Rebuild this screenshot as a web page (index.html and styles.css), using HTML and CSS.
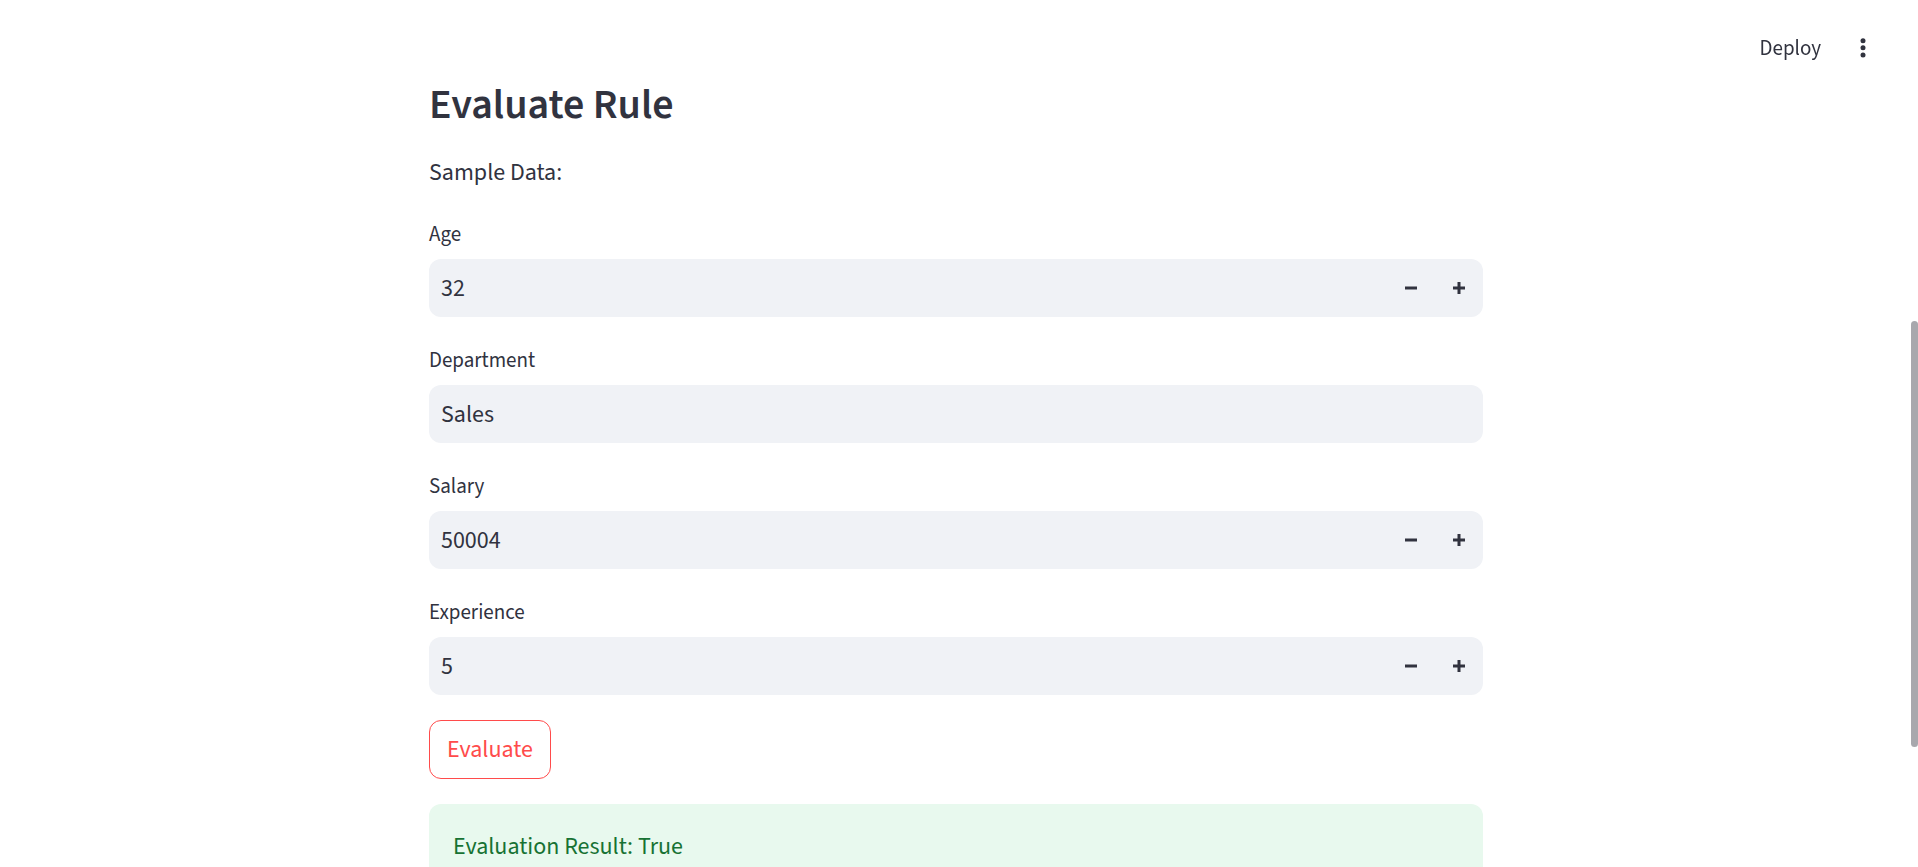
FILE: index.html
```html
<!DOCTYPE html>
<html>
<head>
<meta charset="utf-8">
<title>Evaluate Rule</title>
<link rel="stylesheet" href="styles.css">
</head>
<body>
<header class="topbar">
  <span class="deploy">Deploy</span>
  <svg class="menu" width="24" height="24" viewBox="0 0 24 24" aria-hidden="true">
    <circle cx="12" cy="4.7" r="2.5"/>
    <circle cx="12" cy="11.8" r="2.5"/>
    <circle cx="12" cy="19" r="2.5"/>
  </svg>
</header>
<main class="main">
  <h3 class="title">Evaluate Rule</h3>
  <p class="text">Sample Data:</p>

  <div class="field first">
    <label class="label">Age</label>
    <div class="input">
      <span class="value">32</span>
      <span class="step"><svg width="12" height="12" viewBox="0 0 12 12"><rect x="0" y="4.5" width="12" height="3"/></svg></span>
      <span class="step"><svg width="12" height="12" viewBox="0 0 12 12"><rect x="0" y="4.5" width="12" height="3"/><rect x="4.5" y="0" width="3" height="12"/></svg></span>
    </div>
  </div>

  <div class="field">
    <label class="label">Department</label>
    <div class="input">
      <span class="value">Sales</span>
    </div>
  </div>

  <div class="field">
    <label class="label">Salary</label>
    <div class="input">
      <span class="value">50004</span>
      <span class="step"><svg width="12" height="12" viewBox="0 0 12 12"><rect x="0" y="4.5" width="12" height="3"/></svg></span>
      <span class="step"><svg width="12" height="12" viewBox="0 0 12 12"><rect x="0" y="4.5" width="12" height="3"/><rect x="4.5" y="0" width="3" height="12"/></svg></span>
    </div>
  </div>

  <div class="field">
    <label class="label">Experience</label>
    <div class="input">
      <span class="value">5</span>
      <span class="step"><svg width="12" height="12" viewBox="0 0 12 12"><rect x="0" y="4.5" width="12" height="3"/></svg></span>
      <span class="step"><svg width="12" height="12" viewBox="0 0 12 12"><rect x="0" y="4.5" width="12" height="3"/><rect x="4.5" y="0" width="3" height="12"/></svg></span>
    </div>
  </div>

  <button class="btn">Evaluate</button>

  <div class="alert">Evaluation Result: True</div>
</main>
<div class="scrollbar"></div>
</body>
</html>
```

FILE: styles.css
```css
html, body {
  margin: 0;
  padding: 0;
  background: #ffffff;
  height: 100%;
  overflow: hidden;
}

body {
  font-family: "Source Sans Pro", "Source Sans 3", Lato, sans-serif;
  color: #31333F;
}

.topbar {
  position: fixed;
  top: 0;
  left: 0;
  right: 0;
  height: 96px;
  display: flex;
  align-items: center;
  justify-content: flex-end;
  padding-right: 43px;
  gap: 30px;
}

.deploy {
  font-size: 21px;
  line-height: 30px;
  color: #31333F;
}

.menu {
  display: block;
  fill: #31333F;
}

.main {
  width: 1054px;
  margin-left: 429px;
  padding-top: 80px;
  display: flex;
  flex-direction: column;
  align-items: flex-start;
}

.title {
  margin: 0;
  font-size: 42px;
  line-height: 50px;
  font-weight: 600;
  color: #31333F;
}

.text {
  margin: 24px 0 0;
  font-size: 24px;
  line-height: 38px;
}

.field {
  width: 100%;
  margin-top: 28px;
  display: flex;
  flex-direction: column;
}

.field.first {
  margin-top: 27px;
}

.label {
  font-size: 21px;
  line-height: 30px;
  margin-bottom: 10px;
}

.input {
  height: 58px;
  background: #f0f2f6;
  border-radius: 12px;
  display: flex;
  align-items: center;
  padding-left: 12px;
  font-size: 24px;
}

.value {
  flex: 1;
}

.step {
  width: 48px;
  height: 58px;
  display: flex;
  align-items: center;
  justify-content: center;
  fill: #31333F;
}

.step svg {
  display: block;
}

.btn {
  margin-top: 25px;
  width: 122px;
  height: 59px;
  padding: 0;
  border: 1.5px solid #ff4b4b;
  border-radius: 12px;
  background: #ffffff;
  color: #ff4b4b;
  font-family: inherit;
  font-size: 24px;
}

.alert {
  margin-top: 25px;
  width: 100%;
  box-sizing: border-box;
  padding: 24px 24px 40px;
  border-radius: 12px;
  background: #e8f9ee;
  color: #177233;
  font-size: 24px;
  line-height: 38px;
}

.scrollbar {
  position: fixed;
  right: 0;
  top: 321px;
  width: 7px;
  height: 426px;
  border-radius: 4px;
  background: #a8a8ad;
}
```
